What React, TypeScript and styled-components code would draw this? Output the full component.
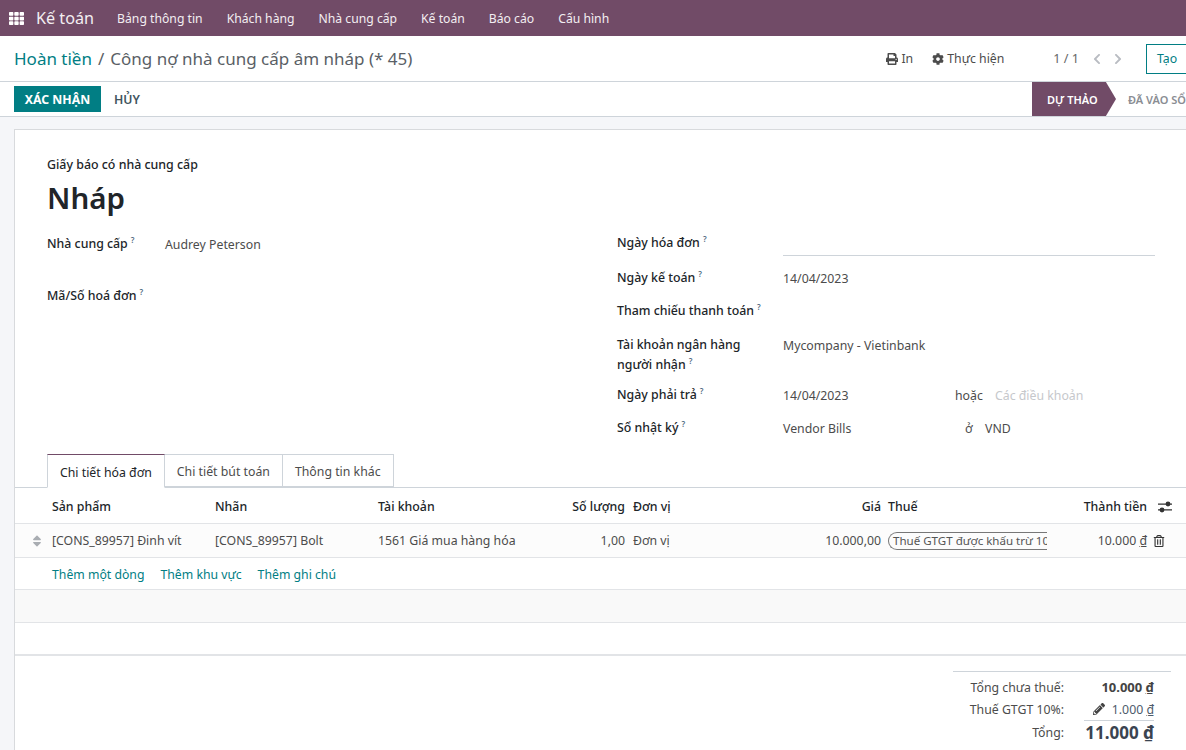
import React from "react";
import styled, { createGlobalStyle } from "styled-components";
import { FaPrint, FaCog, FaChevronLeft, FaChevronRight, FaTh, FaSort, FaRegTrashAlt, FaPencilAlt } from "react-icons/fa";

const Global = createGlobalStyle`
  html, body { margin: 0; padding: 0; }
  body { font-family: "Noto Sans", "Open Sans", sans-serif; font-size: 12.5px; color: #4c4c4c; background: #f5f6f9; }
`;

const Page = styled.div`
  width: 1186px; height: 750px; overflow: hidden; display: flex; flex-direction: column; background: #f5f6f9;
`;
const Nav = styled.header`
  height: 36px; flex: none; background: #714b67; color: #fff; display: flex; align-items: center; padding-left: 9px;
`;
const AppIcon = styled.span`
  display: flex; font-size: 15px; margin-right: 12px; color: #fff;
`;
const Brand = styled.span`
  font-size: 16.2px; margin-right: 23px; color: #f3eef2;
`;
const NavItem = styled.span`
  font-size: 12.2px; margin-right: 24px; color: #f3eef2;
`;
const Control = styled.div`
  height: 45px; flex: none; background: #fff; border-bottom: 1px solid #ced4da; display: flex; align-items: center; padding-left: 14px;
`;
const Crumbs = styled.div`
  font-size: 17px; flex: 1; color: #5a5f66; white-space: nowrap;
`;
const Crumb = styled.span`
  color: #017e84;
`;
const Sep = styled.span`
  margin: 0 6px;
`;
const Action = styled.span`
  display: flex; align-items: center; gap: 3px; font-size: 12.3px; margin-right: 19px; color: #4c4c4c;
`;
const Pager = styled.span`
  font-size: 12.6px; margin-left: 30px; margin-right: 12px; color: #666;
`;
const Arrow = styled.span`
  display: flex; font-size: 12px; color: #b9bcc2; margin-right: 9px;
`;
const Create = styled.span`
  width: 40px; height: 30px; flex: none; margin-left: 13px; border: 1px solid #017e84; border-right: 0; color: #017e84; font-size: 12.3px; display: flex; align-items: center; padding-left: 10px; box-sizing: border-box;
`;
const StatusBar = styled.div`
  height: 35px; flex: none; background: #fff; border-bottom: 1px solid #ced4da; display: flex; align-items: center; padding-left: 14px; overflow: hidden; box-sizing: border-box;
`;
const Confirm = styled.span`
  background: #017e84; color: #fff; font-weight: 700; font-size: 12.3px; height: 26px; width: 87px; display: flex; align-items: center; justify-content: center;
`;
const Cancel = styled.span`
  color: #3f5560; font-weight: 600; font-size: 12.3px; margin-left: 13px; flex: 1;
`;
const Stage = styled.span`
  height: 34px; width: 84px; background: #714b67; color: #fff; font-weight: 600; font-size: 11px; display: flex; align-items: center; padding-left: 15px; box-sizing: border-box; clip-path: polygon(0 0, 88% 0, 100% 50%, 88% 100%, 0 100%); flex: none;
`;
const NextStage = styled.span`
  width: 70px; flex: none; padding-left: 12px; box-sizing: border-box; white-space: nowrap; overflow: hidden; color: #8a8d93; font-weight: 600; font-size: 11px;
`;
const Sheet = styled.main`
  margin: 12px 0 0 14px; width: 1200px; flex: 1; background: #fff; border: 1px solid #d8dadd; border-bottom: 0; box-sizing: border-box;
`;
const Head = styled.div`
  padding: 26px 0 0 32px;
`;
const DocType = styled.div`
  font-weight: 500; color: #212529; font-size: 12.4px; line-height: 18px;
`;
const Title = styled.h1`
  margin: 4px 0 0; font-size: 29.5px; line-height: 40px; font-weight: 600; color: #212529;
`;
const FormGrid = styled.div`
  display: grid; grid-template-columns: 570px 538px; padding: 15px 0 0 32px; height: 236px; box-sizing: border-box;
`;
const Column = styled.div<{ $top?: number }>`
  display: flex; flex-direction: column; padding-top: ${(p) => p.$top ?? 0}px;
`;
const Row = styled.div<{ $h: number }>`
  display: flex; min-height: ${(p) => p.$h}px; line-height: 20px; align-items: flex-start;
`;
const Label = styled.div<{ $w: number }>`
  width: ${(p) => p.$w}px; flex: none; padding-right: 16px; box-sizing: border-box; color: #212529; font-weight: 500; font-size: 12.35px; line-height: 20px;
`;
const Help = styled.sup`
  font-size: 8px; margin-left: 3px; color: #4e6a80; font-weight: 600; line-height: 0;
`;
const Value = styled.div`
  font-size: 12.3px; color: #4c4c4c; line-height: 20px; padding-top: 1px;
`;
const Underlined = styled.div`
  width: 372px; height: 22px; border-bottom: 1px solid #ced4da;
`;
const Inline = styled.span<{ $w: number }>`
  display: inline-block; width: ${(p) => p.$w}px;
`;
const Muted = styled.span`
  color: #c6c8cc;
`;
const Or = styled.span`
  color: #4c4c4c;
`;
const Tabs = styled.div`
  height: 33px; display: flex; padding-left: 32px; border-bottom: 1px solid #ced4da; box-sizing: content-box;
`;
const Tab = styled.div<{ $active?: boolean }>`
  height: 33px; box-sizing: border-box; padding: 2px 12px 0; display: flex; align-items: center; font-size: 12.3px;
  border: 1px solid #ced4da; border-left-width: ${(p) => (p.$active ? 1 : 0)}px; background: #fff;
  color: ${(p) => (p.$active ? "#212529" : "#4c4c4c")};
  ${(p) => (p.$active ? "border-top-color: #714b67; border-bottom-color: #fff; height: 34px;" : "")}
`;
const COLS = "37px 163px 163px 170px 77px 8px 127px 121px 7px 159px 100px 11px 14px";
const HeaderRow = styled.div`
  display: grid; grid-template-columns: ${COLS}; height: 36px; padding-top: 2px; align-items: center; border-bottom: 1px solid #e2e4e7; box-sizing: border-box; font-weight: 500; color: #212529; font-size: 12.35px;
`;
const BodyRow = styled.div`
  display: grid; grid-template-columns: ${COLS}; height: 34px; align-items: center; border-bottom: 1px solid #e2e4e7; box-sizing: border-box; background: #fcfcfc; font-size: 12.3px; white-space: nowrap;
`;
const Right = styled.span`
  text-align: right;
`;
const Handle = styled.span`
  display: flex; justify-content: flex-end; padding-right: 8px; font-size: 14px; color: #a9adb2;
`;
const IconCell = styled.span`
  display: flex; font-size: 12px; color: #333; margin-left: -5px;
`;
const SliderIcon = styled.svg`
  display: block; width: 14px; height: 12px; color: #333;
`;
const TaxClip = styled.span`
  overflow: hidden; display: block;
`;
const TaxTag = styled.span`
  display: inline-block; border: 1px solid #777; border-right: 0; border-radius: 9px 0 0 9px; line-height: 16px; padding: 0 6px 0 4px; font-size: 11.55px; white-space: nowrap; color: #555;
`;
const AddRow = styled.div`
  height: 32px; border-bottom: 1px solid #e2e4e7; display: flex; align-items: center; gap: 16px; padding: 2px 0 0 37px; box-sizing: border-box;
`;
const AddLink = styled.span`
  color: #017e84; font-size: 12.25px;
`;
const EmptyRow = styled.div`
  height: 33px; border-bottom: 1px solid #e2e4e7; box-sizing: border-box; background: #f9f9f9;
`;
const EmptyLast = styled(EmptyRow)`
  background: #fff; border-bottom: 2px solid #e2e4e7;
`;
const Totals = styled.div`
  margin: 15px 0 0 938px; width: 218px; border-top: 1px solid #ced4da; padding-top: 4px;
`;
const TotalRow = styled.div`
  display: grid; grid-template-columns: 111px 90px; height: 22px; align-items: center; font-size: 12.3px; white-space: nowrap;
`;
const TotalLabel = styled.span`
  text-align: right; color: #4c4c4c;
`;
const TotalValue = styled.span`
  display: flex; justify-content: flex-end; align-items: center; gap: 7px; color: #4e5b6b;
`;
const Strong = styled.b`
  font-weight: 700; font-size: 13px; color: #444;
`;
const Grand = styled.span`
  display: flex; justify-content: flex-end; border-top: 1px solid #ced4da; margin-left: 20px; font-weight: 700; font-size: 17px; color: #3b4451; line-height: 24px;
`;
const Dong = styled.span`
  text-decoration: underline;
`;

const Q = () => <Help>?</Help>;

export default function App() {
  return (
    <Page>
      <Global />
      <Nav>
        <AppIcon><FaTh /></AppIcon>
        <Brand>Kế toán</Brand>
        {["Bảng thông tin", "Khách hàng", "Nhà cung cấp", "Kế toán", "Báo cáo", "Cấu hình"].map((t) => (
          <NavItem key={t}>{t}</NavItem>
        ))}
      </Nav>
      <Control>
        <Crumbs><Crumb>Hoàn tiền</Crumb><Sep>/</Sep>Công nợ nhà cung cấp âm nháp (* 45)</Crumbs>
        <Action><FaPrint size={12} />In</Action>
        <Action><FaCog size={12} />Thực hiện</Action>
        <Pager>1 / 1</Pager>
        <Arrow><FaChevronLeft /></Arrow>
        <Arrow><FaChevronRight /></Arrow>
        <Create>Tạo</Create>
      </Control>
      <StatusBar>
        <Confirm>XÁC NHẬN</Confirm>
        <Cancel>HỦY</Cancel>
        <Stage>DỰ THẢO</Stage>
        <NextStage>ĐÃ VÀO SỔ</NextStage>
      </StatusBar>
      <Sheet>
        <Head>
          <DocType>Giấy báo có nhà cung cấp</DocType>
          <Title>Nháp</Title>
        </Head>
        <FormGrid>
          <Column $top={1}>
            <Row $h={52}><Label $w={118}>Nhà cung cấp<Q /></Label><Value>Audrey Peterson</Value></Row>
            <Row $h={40}><Label $w={118}>Mã/Số hoá đơn<Q /></Label></Row>
          </Column>
          <Column>
            <Row $h={35}><Label $w={166}>Ngày hóa đơn<Q /></Label><Underlined /></Row>
            <Row $h={33}><Label $w={166}>Ngày kế toán<Q /></Label><Value>14/04/2023</Value></Row>
            <Row $h={34}><Label $w={166}>Tham chiếu thanh toán<Q /></Label></Row>
            <Row $h={50}><Label $w={166}>Tài khoản ngân hàng người nhận<Q /></Label><Value>Mycompany - Vietinbank</Value></Row>
            <Row $h={33}><Label $w={166}>Ngày phải trả<Q /></Label><Value><Inline $w={172}>14/04/2023</Inline><Inline $w={40}><Or>hoặc</Or></Inline><Muted>Các điều khoản</Muted></Value></Row>
            <Row $h={30}><Label $w={166}>Sổ nhật ký<Q /></Label><Value><Inline $w={182}>Vendor Bills</Inline><Inline $w={20}>ở</Inline>VND</Value></Row>
          </Column>
        </FormGrid>
        <Tabs>
          <Tab $active>Chi tiết hóa đơn</Tab>
          <Tab>Chi tiết bút toán</Tab>
          <Tab>Thông tin khác</Tab>
        </Tabs>
        <HeaderRow>
          <span />
          <span>Sản phẩm</span>
          <span>Nhãn</span>
          <span>Tài khoản</span>
          <Right>Số lượng</Right>
          <span />
          <span>Đơn vị</span>
          <Right>Giá</Right>
          <span />
          <span>Thuế</span>
          <Right>Thành tiền</Right>
          <span />
          <SliderIcon viewBox="0 0 14 12" fill="none" stroke="currentColor" strokeWidth="1.2">
            <path d="M0 3.2H14M0 8.8H14" />
            <circle cx="10" cy="3" r="2.4" fill="currentColor" stroke="none" />
            <circle cx="4" cy="9" r="2.4" fill="currentColor" stroke="none" />
          </SliderIcon>
        </HeaderRow>
        <BodyRow>
          <Handle><FaSort /></Handle>
          <span>[CONS_89957] Đinh vít</span>
          <span>[CONS_89957] Bolt</span>
          <span>1561 Giá mua hàng hóa</span>
          <Right>1,00</Right>
          <span />
          <span>Đơn vị</span>
          <Right>10.000,00</Right>
          <span />
          <TaxClip><TaxTag>Thuế GTGT được khấu trừ 10%</TaxTag></TaxClip>
          <Right>10.000 <Dong>₫</Dong></Right>
          <span />
          <IconCell><FaRegTrashAlt /></IconCell>
        </BodyRow>
        <AddRow>
          <AddLink>Thêm một dòng</AddLink>
          <AddLink>Thêm khu vực</AddLink>
          <AddLink>Thêm ghi chú</AddLink>
        </AddRow>
        <EmptyRow />
        <EmptyLast />
        <Totals>
          <TotalRow><TotalLabel>Tổng chưa thuế:</TotalLabel><TotalValue><Strong>10.000 <Dong>₫</Dong></Strong></TotalValue></TotalRow>
          <TotalRow><TotalLabel>Thuế GTGT 10%:</TotalLabel><TotalValue><FaPencilAlt size={12} color="#444" /><span>1.000 <Dong>₫</Dong></span></TotalValue></TotalRow>
          <TotalRow><TotalLabel>Tổng:</TotalLabel><Grand>11.000&nbsp;<Dong>₫</Dong></Grand></TotalRow>
        </Totals>
      </Sheet>
    </Page>
  );
}
